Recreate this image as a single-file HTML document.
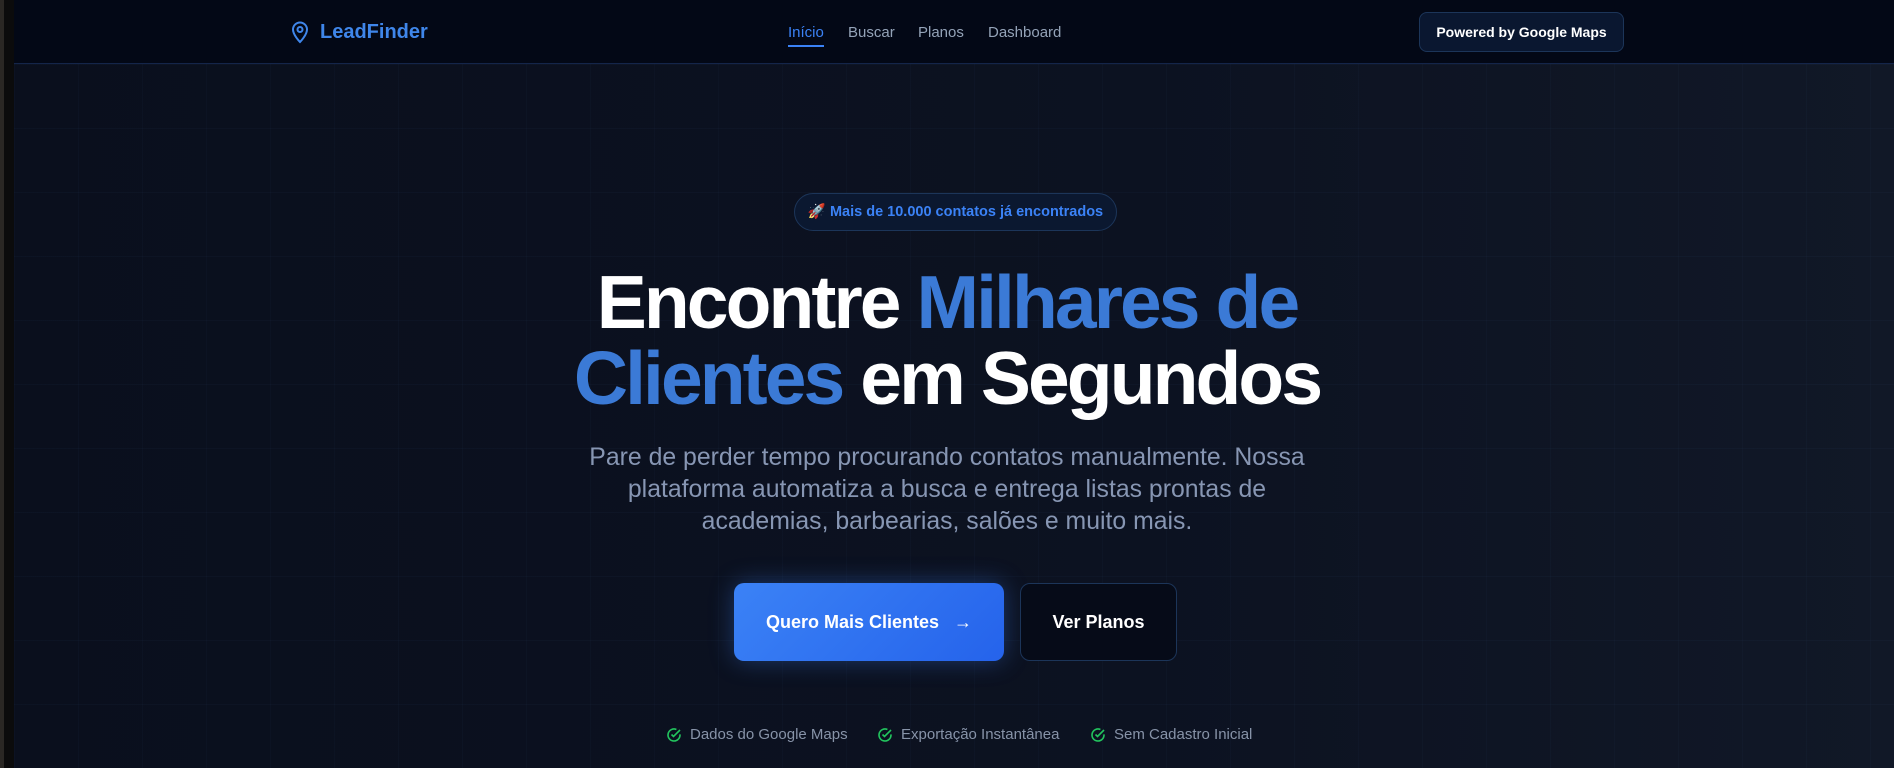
<!DOCTYPE html>
<html><head><meta charset="utf-8"><style>
*{margin:0;padding:0;box-sizing:border-box}
html,body{width:1894px;height:768px;overflow:hidden}
body{font-family:"Liberation Sans",sans-serif;background:#0b1120;position:relative}
.strip{position:absolute;left:0;top:0;width:14px;height:768px;background:#0b0b0c;border-left:4px solid #2a2724}
.main{position:absolute;left:14px;top:0;right:0;bottom:0;background:linear-gradient(90deg,#0a0f1d 0%,#0c1221 60%,#111827 100%)}
.grid{position:absolute;inset:64px 0 0 0;background-image:linear-gradient(rgba(60,90,140,.06) 1px,transparent 1px),linear-gradient(90deg,rgba(60,90,140,.05) 1px,transparent 1px);background-size:64px 64px}
nav{position:absolute;left:14px;right:0;top:0;height:64px;background:#030816;border-bottom:1px solid #14254a}
.logo{position:absolute;left:290px;top:20px;display:flex;align-items:center;color:#3f86ea;font-weight:700;font-size:20px}
.logo svg{margin-right:10px}
.links a{position:absolute;top:24px;font-size:15px;color:#94a3b8;text-decoration:none}
.pw{position:absolute;left:1419px;top:12px;width:205px;height:40px;border:1px solid #1c3559;background:#0a1730;border-radius:8px;color:#fff;font-weight:700;font-size:14px;text-align:center;line-height:38px}
.badge{position:absolute;left:794px;top:193px;width:323px;height:38px;border:1px solid #1c3559;background:#0b1830;border-radius:19px;color:#3b82f6;font-size:14.5px;font-weight:700;line-height:36px;text-align:center}
h1{position:absolute;left:0;right:0;top:264px;text-align:center;font-size:75px;font-weight:700;line-height:76px;color:#fff;letter-spacing:-2.9px}
h1 span{color:#3b7ad6}
p.lead{position:absolute;left:0;right:0;top:442px;text-align:center;font-size:24.8px;line-height:32px;color:#8796b3}
.b1{position:absolute;left:734px;top:583px;width:270px;height:78px;border-radius:10px;background:linear-gradient(135deg,#3b82f6,#2563eb);box-shadow:0 0 24px rgba(59,130,246,.35);color:#fff;font-size:18px;font-weight:700;line-height:78px;text-align:center}
.b2{position:absolute;left:1020px;top:583px;width:157px;height:78px;border-radius:10px;border:1px solid #1c3559;background:#060b18;color:#fff;font-size:18px;font-weight:700;line-height:76px;text-align:center}
.chk{position:absolute;top:726px;font-size:15px;color:#8793a8;display:flex;align-items:center}
.chk svg{margin-right:8px}
</style></head><body>
<div class="strip"></div>
<div class="main"><div class="grid"></div></div>
<nav></nav>
<div class="logo"><svg width="20" height="24" viewBox="0 0 20 24" fill="none" stroke="#3f86ea" stroke-width="2"><path d="M10 22s-7-7-7-12.5a7 7 0 0 1 14 0C17 15 10 22 10 22z"/><circle cx="10" cy="9.5" r="2.5"/></svg>LeadFinder</div>
<div class="links">
<a style="left:788px;color:#3b82f6">Início</a>
<div style="position:absolute;left:788px;top:45px;width:36px;height:2px;background:#3b82f6"></div>
<a style="left:848px">Buscar</a>
<a style="left:918px">Planos</a>
<a style="left:988px">Dashboard</a>
</div>
<div class="pw">Powered by Google Maps</div>
<div class="badge">🚀 Mais de 10.000 contatos já encontrados</div>
<h1>Encontre <span>Milhares de</span><br><span>Clientes</span> em Segundos</h1>
<p class="lead">Pare de perder tempo procurando contatos manualmente. Nossa<br>plataforma automatiza a busca e entrega listas prontas de<br>academias, barbearias, salões e muito mais.</p>
<div class="b1">Quero Mais Clientes &nbsp;&nbsp;→</div>
<div class="b2">Ver Planos</div>
<div class="chk" style="left:666px"><svg width="16" height="16" viewBox="0 0 16 16" fill="none" stroke="#22c55e" stroke-width="1.6"><path d="M14 7.4V8a6 6 0 1 1-3.6-5.5"/><path d="M5.5 7.5l2 2L14 3"/></svg>Dados do Google Maps</div>
<div class="chk" style="left:877px"><svg width="16" height="16" viewBox="0 0 16 16" fill="none" stroke="#22c55e" stroke-width="1.6"><path d="M14 7.4V8a6 6 0 1 1-3.6-5.5"/><path d="M5.5 7.5l2 2L14 3"/></svg>Exportação Instantânea</div>
<div class="chk" style="left:1090px"><svg width="16" height="16" viewBox="0 0 16 16" fill="none" stroke="#22c55e" stroke-width="1.6"><path d="M14 7.4V8a6 6 0 1 1-3.6-5.5"/><path d="M5.5 7.5l2 2L14 3"/></svg>Sem Cadastro Inicial</div>
</body></html>
